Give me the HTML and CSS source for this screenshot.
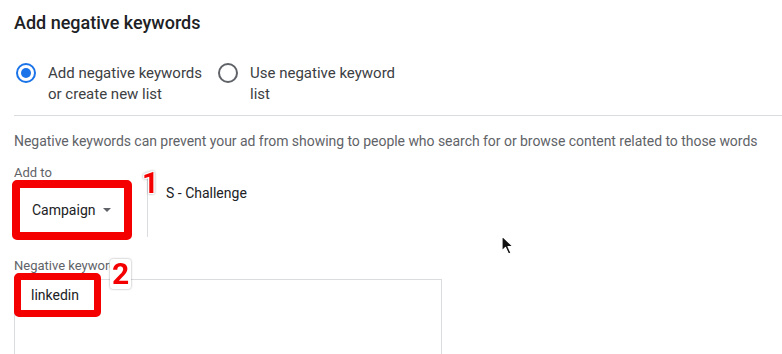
FILE: index.html
```html
<!DOCTYPE html>
<html lang="en">

<head>
    <meta charset="UTF-8">
    <meta name="viewport" content="width=device-width, initial-scale=1.0">
    <title>Add negative keywords</title>
    <link rel="stylesheet" href="styles.css">
</head>

<body>

    <div class="panel">
        <h2 class="panel-title">Add negative keywords</h2>

        <div class="radio-group">
            <label class="radio-option">
                <span class="radio checked"></span>
                <span class="radio-text">Add negative keywords<br>or create new list</span>
            </label>
            <label class="radio-option">
                <span class="radio"></span>
                <span class="radio-text">Use negative keyword<br>list</span>
            </label>
        </div>

        <p class="hint">Negative keywords can prevent your ad from showing to people who search for or browse content related to those words</p>

        <div class="add-to-row">
            <div class="field">
                <div class="field-label">Add to</div>
                <div class="dropdown highlight">
                    <span>Campaign</span>
                    <span class="caret"></span>
                </div>
            </div>
            <div class="v-divider"></div>
            <div class="campaign-name">S - Challenge</div>
            <span class="step step-1">1</span>
        </div>

        <div class="keywords">
            <div class="field-label">Negative keywords</div>
            <div class="keyword-box">
                <div class="keyword-chip highlight">linkedin</div>
            </div>
            <span class="step step-2">2</span>
        </div>
    </div>

    <!-- mouse pointer from the screen recording -->
    <svg class="pointer" width="14" height="21" viewBox="0 0 14 21">
        <path d="M1 1 L1 16 L4.5 12.5 L7.5 19 L10 18 L7 11.5 L12 11.5 Z" fill="#111" stroke="#fff" stroke-width="1.2" stroke-linejoin="round"/>
    </svg>

</body>

</html>
```

FILE: styles.css
```css
body {
    font-family: Roboto, "Noto Sans", Arial, sans-serif;
    margin: 0;
    padding: 0;
    background-color: #fff;
    color: #202124;
    position: relative;
    overflow: hidden;
    height: 354px;
}

.panel {
    padding: 11px 0 0 14px;
}

.panel-title {
    margin: 0;
    font-size: 18px;
    line-height: 24px;
    font-weight: 500;
    color: #202124;
}

.radio-group {
    display: flex;
    gap: 14px;
    margin-top: 28px;
    padding-bottom: 10px;
    border-bottom: 1px solid #dadce0;
}

.radio-option {
    display: flex;
    align-items: flex-start;
    font-size: 15px;
    line-height: 21px;
    color: #3c4043;
}

.radio {
    box-sizing: border-box;
    width: 20px;
    height: 20px;
    margin: 0 12px 0 2px;
    border: 2px solid #5f6368;
    border-radius: 50%;
    display: flex;
    align-items: center;
    justify-content: center;
}

.radio.checked {
    border-color: #1a73e8;
}

.radio.checked::after {
    content: "";
    width: 10px;
    height: 10px;
    border-radius: 50%;
    background-color: #1a73e8;
}

.hint {
    margin: 15px 0 0;
    font-size: 14px;
    line-height: 20px;
    letter-spacing: -0.04px;
    color: #5f6368;
}

.add-to-row {
    position: relative;
    display: flex;
    align-items: flex-start;
    margin-top: 14px;
}

.field-label {
    font-size: 13px;
    line-height: 15px;
    color: #5f6368;
}

.highlight {
    border: 8px solid #f40000;
    border-radius: 5px;
    box-sizing: border-box;
}

.dropdown {
    display: flex;
    align-items: center;
    width: 120px;
    height: 60px;
    margin-left: -2px;
    padding-left: 12px;
    font-size: 14px;
    color: #202124;
}

.caret {
    margin-left: 8px;
    border-left: 4px solid transparent;
    border-right: 4px solid transparent;
    border-top: 4px solid #5f6368;
}

.v-divider {
    width: 1px;
    height: 60px;
    margin: 12px 0 0 15px;
    background-color: #dadce0;
}

.campaign-name {
    margin: 18px 0 0 18px;
    font-size: 14px;
    line-height: 20px;
    color: #202124;
}

.step {
    position: absolute;
    font-weight: 700;
    color: #f40000;
    line-height: 1;
    text-shadow: 0 0 2px #fff, 1px 1px 0 #fff, -1px -1px 0 #fff, 1px -1px 0 #fff, -1px 1px 0 #fff;
    filter: drop-shadow(0 0 1px rgba(0, 0, 0, 0.35));
}

.step-1 {
    left: 128px;
    top: 4px;
    font-size: 29px;
}

.keywords {
    position: relative;
    margin-top: 18px;
}

.keywords .field-label {
    line-height: 16px;
}

.keyword-box {
    width: 428px;
    height: 110px;
    margin-top: 5px;
    border: 1px solid #dadce0;
    box-sizing: border-box;
}

.keyword-chip {
    display: inline-block;
    width: 87px;
    height: 44px;
    margin: -7px 0 0 -1px;
    padding-left: 10px;
    border-width: 7px;
    font-size: 14px;
    line-height: 30px;
    color: #202124;
    background-color: #fff;
}

.step-2 {
    left: 96px;
    top: 1px;
    padding: 0 2px;
    font-size: 30px;
    background-color: #fff;
    border-radius: 3px;
}

.pointer {
    position: absolute;
    left: 501px;
    top: 235px;
}
```
